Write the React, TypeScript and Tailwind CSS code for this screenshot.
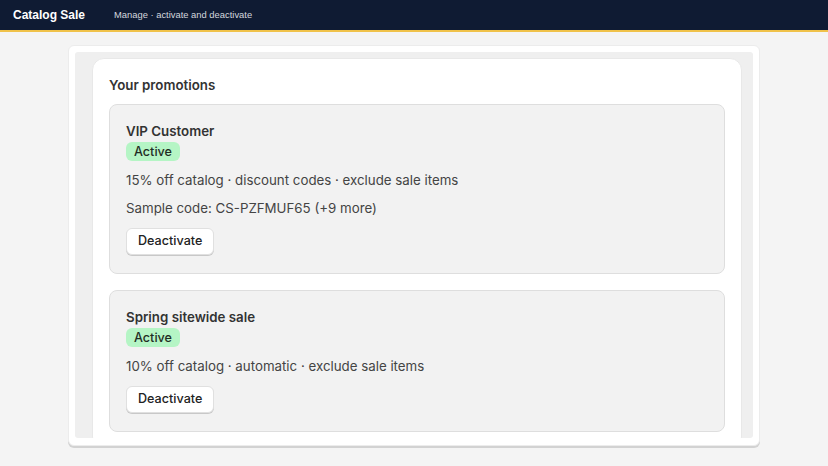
const promotions = [
  {
    name: 'VIP Customer',
    summary: '15% off catalog · discount codes · exclude sale items',
    sample: 'Sample code: CS-PZFMUF65 (+9 more)',
  },
  {
    name: 'Spring sitewide sale',
    summary: '10% off catalog · automatic · exclude sale items',
    sample: null,
  },
];

export default function App() {
  return (
    <div className="min-h-[466px] bg-[#f4f4f4] font-['Inter',sans-serif]">
      {/* Top bar */}
      <header className="h-[32px] bg-[#0f1b33] border-b-2 border-[#f0c24a] flex items-center px-[13px] font-['Liberation_Sans',Arial,sans-serif]">
        <span className="text-white text-[12px] font-bold w-[101px]">Catalog Sale</span>
        <span className="text-[#d4d7de] text-[9.4px]">Manage · activate and deactivate</span>
      </header>

      <div className="pt-[13px] pl-[68px]">
        <div className="w-[692px] bg-white rounded-[6px] p-[6px] pb-[7px] shadow-[0_2px_0_#d2d2d2] border border-[#ececec]">
          <div className="h-[386px] overflow-hidden bg-[#efefef] rounded-[3px] pt-[6px] pl-[17px] pr-[11px]">
            <div className="bg-white rounded-[12px] border border-[#e8e8e8] p-[16px]">
              <h2 className="text-[13.3px] leading-[20px] font-semibold text-[#333]">Your promotions</h2>

              <div className="mt-[9px] flex flex-col gap-[16px]">
                {promotions.map((p) => (
                  <div key={p.name} className="bg-[#f2f2f2] border border-[#dedede] rounded-[8px] p-[16px] pb-[18px]">
                    <h3 className="text-[13.3px] leading-[20px] font-semibold text-[#333]">{p.name}</h3>
                    <span className="mt-[1px] block w-fit h-[19px] leading-[19px] px-[8px] rounded-[6px] bg-[#b5f5c5] text-[12.6px] font-medium text-[#1f2d24]">
                      Active
                    </span>
                    <p className="mt-[9px] text-[13.3px] leading-[20px] text-[#444]">{p.summary}</p>
                    {p.sample && (
                      <p className="mt-[8px] text-[13.3px] leading-[20px] text-[#444]">{p.sample}</p>
                    )}
                    <button className="mt-[10px] block h-[27px] px-[11px] bg-white rounded-[6px] border border-[#e0e0e0] shadow-[0_1px_0_#c8c8c8] text-[12.6px] font-medium text-[#222]">
                      Deactivate
                    </button>
                  </div>
                ))}
              </div>
            </div>
          </div>
        </div>
      </div>
    </div>
  );
}
